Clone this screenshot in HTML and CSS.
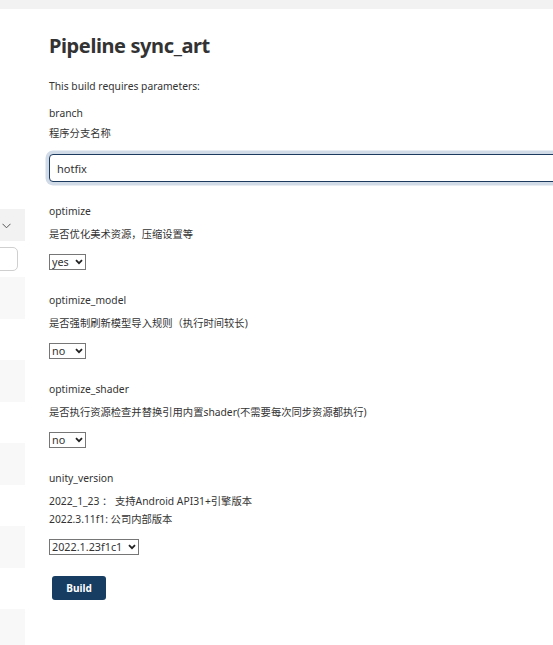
FILE: index.html
```html
<!DOCTYPE html>
<html lang="zh-CN">
<head>
<meta charset="utf-8">
<title>Pipeline sync_art</title>
<link rel="stylesheet" href="styles.css">
</head>
<body>
<div class="topbar"></div>
<div class="layout">
  <aside class="side">
    <div class="side-head">
      <svg class="side-chev" width="9" height="6" viewBox="0 0 9 6"><path d="M0.5 0.8 L4.5 4.8 L8.5 0.8" fill="none" stroke="#555" stroke-width="1"/></svg>
    </div>
    <div class="side-search"></div>
    <div class="side-row alt"></div>
    <div class="side-row"></div>
    <div class="side-row alt"></div>
    <div class="side-row"></div>
    <div class="side-row alt"></div>
    <div class="side-row"></div>
    <div class="side-row alt"></div>
    <div class="side-row"></div>
    <div class="side-row alt"></div>
  </aside>
  <main class="main">
    <h1 class="title">Pipeline sync_art</h1>
    <p class="intro">This build requires parameters:</p>
    <form class="params">
      <div class="param param-text">
        <div class="p-name">branch</div>
        <div class="p-desc">程序分支名称</div>
        <input class="text-input" type="text" value="hotfix">
      </div>
      <div class="param">
        <div class="p-name">optimize</div>
        <div class="p-desc">是否优化美术资源，压缩设置等</div>
        <span class="sel-wrap">
          <select class="sel sel-short"><option>yes</option><option>no</option></select>
          <svg class="sel-chev" width="8" height="6" viewBox="0 0 8 6"><path d="M1 1.2 L4 4.2 L7 1.2" fill="none" stroke="#222" stroke-width="1.8"/></svg>
        </span>
      </div>
      <div class="param">
        <div class="p-name">optimize_model</div>
        <div class="p-desc">是否强制刷新模型导入规则（执行时间较长)</div>
        <span class="sel-wrap">
          <select class="sel sel-short"><option>no</option><option>yes</option></select>
          <svg class="sel-chev" width="8" height="6" viewBox="0 0 8 6"><path d="M1 1.2 L4 4.2 L7 1.2" fill="none" stroke="#222" stroke-width="1.8"/></svg>
        </span>
      </div>
      <div class="param">
        <div class="p-name">optimize_shader</div>
        <div class="p-desc">是否执行资源检查并替换引用内置shader(不需要每次同步资源都执行)</div>
        <span class="sel-wrap">
          <select class="sel sel-short"><option>no</option><option>yes</option></select>
          <svg class="sel-chev" width="8" height="6" viewBox="0 0 8 6"><path d="M1 1.2 L4 4.2 L7 1.2" fill="none" stroke="#222" stroke-width="1.8"/></svg>
        </span>
      </div>
      <div class="param">
        <div class="p-name">unity_version</div>
        <div class="p-desc">2022_1_23 ： 支持Android API31+引擎版本<br>2022.3.11f1: 公司内部版本</div>
        <span class="sel-wrap">
          <select class="sel sel-long"><option>2022.1.23f1c1</option><option>2022.3.11f1</option></select>
          <svg class="sel-chev" width="8" height="6" viewBox="0 0 8 6"><path d="M1 1.2 L4 4.2 L7 1.2" fill="none" stroke="#222" stroke-width="1.8"/></svg>
        </span>
      </div>
      <div class="actions">
        <button class="build-btn" type="button">Build</button>
      </div>
    </form>
  </main>
</div>
</body>
</html>
```

FILE: styles.css
```css
html, body {
  margin: 0;
  padding: 0;
  background: #fff;
  overflow: hidden;
}
body {
  font-family: "Noto Sans", "Noto Sans CJK SC", sans-serif;
  color: #333;
  font-size: 10.3px;
  width: 553px;
  height: 645px;
}
.topbar {
  height: 9px;
  background: #f2f2f2;
}
.layout {
  display: flex;
}
.side {
  width: 25px;
  flex: none;
  padding-top: 200px;
  display: flex;
  flex-direction: column;
}
.side-head {
  height: 32px;
  background: #f2f2f2;
  display: flex;
  align-items: center;
  padding-left: 2px;
}
.side-chev {
  margin-top: 2px;
}
.side-search {
  margin-top: 6px;
  margin-left: -10px;
  width: 26px;
  height: 22px;
  border: 1px solid #cfcfcf;
  border-radius: 5px;
  background: #fff;
}
.side-row {
  height: 41.5px;
}
.side-search + .side-row {
  margin-top: 6px;
}
.side-row.alt {
  background: #f8f8f8;
}
.main {
  padding-left: 24px;
  padding-top: 22px;
  flex: 1;
  min-width: 0;
}
.title {
  margin: 0;
  font-size: 20px;
  line-height: 30px;
  font-weight: 700;
  color: #333;
  letter-spacing: -0.4px;
}
.intro {
  margin: 17px 0 0;
  line-height: 16px;
}
.params {
  margin: 11px 0 0;
}
.param {
  margin-bottom: 22px;
}
.param-text {
  margin-bottom: 21px;
}
.p-name {
  line-height: 16px;
}
.p-desc {
  line-height: 18px;
  margin-top: 6px;
  margin-bottom: 11px;
}
.param-text .p-desc {
  margin-top: 3px;
  margin-bottom: 12px;
}
.text-input {
  display: block;
  box-sizing: border-box;
  width: 620px;
  height: 28px;
  margin: 0;
  padding: 0 7px;
  border: 1.5px solid #1d3a5f;
  border-radius: 4px;
  box-shadow: 0 0 0 3.5px #d1dbe7;
  font-family: "Noto Sans", "Noto Sans CJK SC", sans-serif;
  font-size: 11px;
  color: #333;
  outline: none;
  background: #fff;
}
.sel-wrap {
  position: relative;
  display: inline-block;
  vertical-align: top;
}
.sel {
  appearance: none;
  -webkit-appearance: none;
  display: block;
  box-sizing: border-box;
  height: 16px;
  margin: 0;
  padding: 0 0 0 2px;
  border: 1px solid #767676;
  border-radius: 0;
  background: #fff;
  font-family: "Noto Sans", "Noto Sans CJK SC", sans-serif;
  font-size: 10.8px;
  line-height: 14px;
  color: #333;
}
.sel-short {
  width: 37px;
}
.sel-long {
  width: 90px;
}
.sel-chev {
  position: absolute;
  right: 3px;
  top: 5px;
  pointer-events: none;
}
.actions {
  margin-top: -1px;
  padding-left: 3px;
}
.build-btn {
  display: block;
  width: 54px;
  height: 24px;
  border: none;
  border-radius: 3px;
  background: #173d62;
  color: #fff;
  font-family: "Noto Sans", sans-serif;
  font-weight: 700;
  font-size: 10px;
  padding: 0;
}
```
